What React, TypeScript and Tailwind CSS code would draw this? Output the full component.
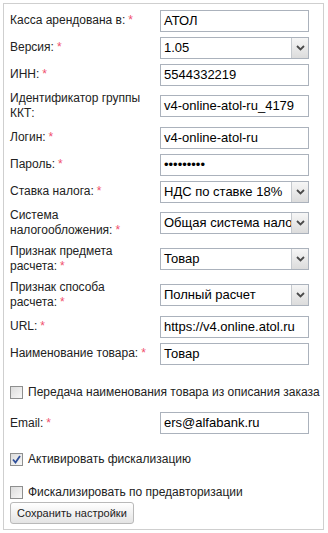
import React from "react";

const font = { fontFamily: '"Liberation Sans", Arial, sans-serif' };

function Star() {
  return <span className="ml-[3px] text-[#f0506e]">*</span>;
}

function Label({ children, req = true }: { children: React.ReactNode; req?: boolean }) {
  return (
    <div className="w-[150px] shrink-0 text-[12px] leading-[15px] text-[#222]">
      {children}
      {req ? <Star /> : null}
    </div>
  );
}

function TextInput({ value }: { value: string }) {
  return (
    <div className="flex h-[22px] w-[149px] items-center border border-[#abb2bc] bg-white px-[3px] text-[13px] text-black whitespace-nowrap overflow-hidden">
      {value}
    </div>
  );
}

function Select({ value }: { value: string }) {
  return (
    <div className="flex h-[22px] w-[149px] border border-[#abb2bc] bg-white text-[13px] text-black">
      <div className="flex flex-1 items-center overflow-hidden whitespace-nowrap px-[3px]">{value}</div>
      <div className="flex w-[17px] items-center justify-center border-l border-[#c5c9ce] bg-gradient-to-b from-[#f6f6f6] to-[#dcdcdc]">
        <svg width="9" height="6" viewBox="0 0 9 6">
          <path d="M1 1 L4.5 4.5 L8 1" fill="none" stroke="#4a4a4a" strokeWidth="1.8" />
        </svg>
      </div>
    </div>
  );
}

function Checkbox({ checked }: { checked?: boolean }) {
  return (
    <span className="flex h-[13px] w-[13px] shrink-0 items-center justify-center border border-[#8e8f8f] bg-gradient-to-br from-[#dcdcdc] to-[#f8f8f8]">
      {checked ? (
        <svg width="9" height="9" viewBox="0 0 9 9">
          <path d="M1 4.5 L3.5 7.5 L8 1" fill="none" stroke="#2f4f9a" strokeWidth="1.8" />
        </svg>
      ) : null}
    </span>
  );
}

type Row = { label: string; value: string; kind: "input" | "select"; tall?: boolean; req?: boolean };

const rows: Row[] = [
  { label: "Касса арендована в:", value: "АТОЛ", kind: "input" },
  { label: "Версия:", value: "1.05", kind: "select" },
  { label: "ИНН:", value: "5544332219", kind: "input" },
  { label: "Идентификатор группы ККТ:", value: "v4-online-atol-ru_4179", kind: "input", tall: true, req: false },
  { label: "Логин:", value: "v4-online-atol-ru", kind: "input" },
  { label: "Пароль:", value: "•••••••••", kind: "input" },
  { label: "Ставка налога:", value: "НДС по ставке 18%", kind: "select" },
  { label: "Система налогообложения:", value: "Общая система налогообложения", kind: "select", tall: true },
  { label: "Признак предмета расчета:", value: "Товар", kind: "select", tall: true },
  { label: "Признак способа расчета:", value: "Полный расчет", kind: "select", tall: true },
  { label: "URL:", value: "https://v4.online.atol.ru", kind: "input" },
  { label: "Наименование товара:", value: "Товар", kind: "input" },
];

export default function App() {
  return (
    <div className="h-[533px] w-[328px] bg-white p-[3px]" style={font}>
      <div className="h-[527px] w-[321px] border border-[#cfcfcf] px-[6px] pt-[3px]">
        {rows.map((r) => (
          <div key={r.label} className={`flex items-center ${r.tall ? "h-[36px]" : "h-[27px]"}`}>
            <Label req={r.req !== false}>{r.label}</Label>
            {r.kind === "input" ? <TextInput value={r.value} /> : <Select value={r.value} />}
          </div>
        ))}

        <label className="mt-[18px] flex items-center gap-[5px] text-[12px] leading-[14px] text-[#222]">
          <Checkbox />
          <span className="whitespace-nowrap">Передача наименования товара из описания заказа</span>
        </label>

        <div className="mt-[13px] flex h-[22px] items-center">
          <Label>Email:</Label>
          <TextInput value="ers@alfabank.ru" />
        </div>

        <label className="mt-[18px] flex items-center gap-[5px] text-[12px] leading-[14px] text-[#222]">
          <Checkbox checked />
          <span>Активировать фискализацию</span>
        </label>

        <label className="mt-[19px] flex items-center gap-[5px] text-[12px] leading-[14px] text-[#222]">
          <Checkbox />
          <span>Фискализировать по предавторизации</span>
        </label>

        <button
          type="button"
          className="mt-[3px] h-[22px] rounded-[3px] border border-[#b9b9b9] bg-gradient-to-b from-white to-[#e4e4e4] px-[6px] text-[11px] leading-[14px] text-[#222]"
        >
          Сохранить настройки
        </button>
      </div>
    </div>
  );
}
